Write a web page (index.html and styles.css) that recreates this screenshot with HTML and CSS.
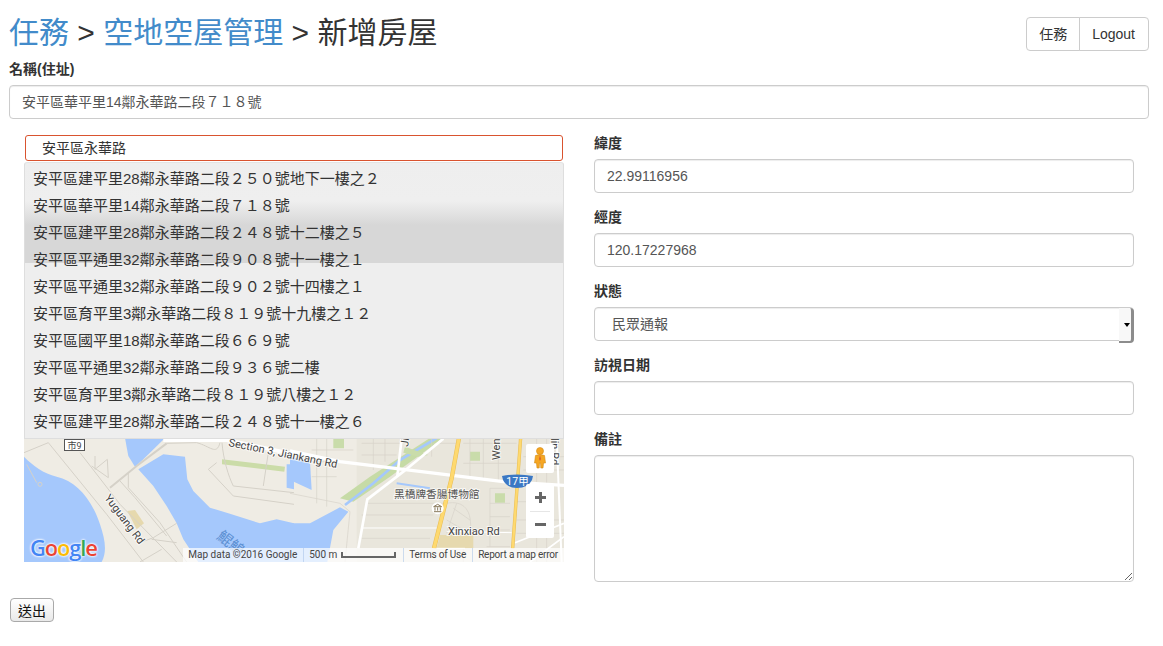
FILE: index.html
```html
<!DOCTYPE html>
<html lang="zh-Hant">
<head>
    <meta charset="UTF-8">
    <title>新增房屋</title>
    <link rel="stylesheet" href="styles.css">
</head>
<body>
    <div class="page">
        <div class="top-bar">
            <h1><a href="#">任務</a> <span class="sep">&gt;</span> <a href="#">空地空屋管理</a> <span class="sep">&gt;</span> 新增房屋</h1>
            <div class="btn-group">
                <a class="btn" href="#">任務</a>
                <a class="btn" href="#">Logout</a>
            </div>
        </div>

        <form>
            <div class="field">
                <label>名稱(住址)</label>
                <input class="control control-cjk" type="text" value="安平區華平里14鄰永華路二段７１８號">
            </div>

            <div class="row">
                <div class="col">
                    <input class="map-search" type="text" value="安平區永華路">
                    <ul class="suggestions">
                        <li>安平區建平里28鄰永華路二段２５０號地下一樓之２</li>
                        <li>安平區華平里14鄰永華路二段７１８號</li>
                        <li>安平區建平里28鄰永華路二段２４８號十二樓之５</li>
                        <li>安平區平通里32鄰永華路二段９０８號十一樓之１</li>
                        <li>安平區平通里32鄰永華路二段９０２號十四樓之１</li>
                        <li>安平區育平里3鄰永華路二段８１９號十九樓之１２</li>
                        <li>安平區國平里18鄰永華路二段６６９號</li>
                        <li>安平區平通里32鄰永華路二段９３６號二樓</li>
                        <li>安平區育平里3鄰永華路二段８１９號八樓之１２</li>
                        <li>安平區建平里28鄰永華路二段２４８號十一樓之６</li>
                    </ul>
                    <div class="map">
                        <svg class="map-canvas" viewBox="0 0 540 124" width="540" height="124">
                            <rect width="540" height="124" fill="#efece4"/>

                            <!-- left half, coords taken at 3x -->
                            <g transform="translate(-4,-2) scale(.3333)" fill="none">
                                <path d="M12,62 C40,90 70,112 110,122 C170,135 215,190 240,265 C255,310 262,345 245,378 L12,378 Z" fill="#a5c8fc"/>
                                <path d="M355,100 L430,55 L495,62 L502,130 L520,165 L570,215 L625,232 L720,262 L770,250 L822,262 L822,378 L535,378 L490,310 L470,262 L440,210 L400,150 Z" fill="#a5c8fc"/>
                                <path d="M315,6 L435,6 L370,70 L345,92 L325,60 Z" fill="#a5c8fc"/>
                                <path d="M822,85 L800,85 L800,155 L822,160 Z" fill="#a5c8fc"/>
                                <path d="M322,225 L345,222 L372,262 L350,280 Z" fill="#e6d9ae"/>
                                <path d="M606,70 L795,92 L793,107 L606,85 Z" fill="#cbdca8"/>
                                <path d="M430,12 L620,12 L822,55" stroke="#fff" stroke-width="12"/>
                                <g stroke="#d5d1c8" stroke-width="3">
                                    <path d="M270,155 L350,90 L440,22" stroke-width="6"/>
                                    <path d="M12,50 L85,20 L260,235 L370,378"/>
                                    <path d="M20,85 L50,140"/>
                                    <circle cx="60" cy="145" r="6"/>
                                    <path d="M180,50 L300,205 L470,378"/>
                                    <path d="M225,60 L225,100 L262,70 L265,125 L215,90"/>
                                    <path d="M325,110 L325,155 L420,260 L500,378"/>
                                    <path d="M300,135 L345,185 L440,300"/>
                                    <path d="M470,262 L400,305 L360,320"/>
                                    <path d="M395,310 L470,320 M425,340 L360,378"/>
                                    <path d="M440,22 L530,20 C570,30 590,60 600,20"/>
                                    <path d="M606,20 C610,70 625,120 640,150 L822,170"/>
                                    <path d="M565,100 L640,180 L822,205 M590,80 L565,100"/>
                                    <path d="M745,50 L730,150"/>
                                </g>
                            </g>

                            <!-- right half, urban grid -->
                            <g transform="translate(266,-18) scale(.3333)" fill="none">
                                <rect x="200" y="54" width="622" height="372" fill="#e9e6dc"/>
                                <path d="M0,310 L60,310 L150,262 L175,275 L130,330 L112,426 L0,426 Z" fill="#a5c8fc"/>
                                <path d="M0,110 L60,125 L65,210 L0,180 Z" fill="#a5c8fc"/>
                                <path d="M150,235 L240,170 L420,54 L460,54 L300,170 L190,245 Z" fill="#c6dba6"/>
                                <path d="M165,255 L250,190 L330,120 L440,54" stroke="#a5c8fc" stroke-width="8"/>
                                <path d="M320,190 L420,205" stroke="#a5c8fc" stroke-width="6"/>
                                <path d="M130,56 H162 V85 H130 Z M345,80 L415,105 L385,110 L340,98 Z M540,95 H570 V122 H540 Z M615,220 H645 V248 H615 Z" fill="#c9dcaa"/>
                                <path d="M450,345 L550,345 L550,385 L440,385 Z" fill="#e6d9ae"/>
                                <g stroke="#d6d2c8" stroke-width="2">
                                    <path d="M80,54 V250 M110,54 V260 M250,54 V150 M285,54 V125 M425,54 V110 M540,54 V170 M580,54 V180 M625,54 V180 M740,54 V426 M770,54 V426"/>
                                    <path d="M65,90 H190 M65,125 H160 M65,170 H140 M215,70 H330 M215,105 H320 M430,70 H500 M520,70 H680 M520,130 H680 M700,110 H822 M700,150 H822"/>
                                    <path d="M0,220 L150,250 L180,275 L165,426 M230,250 L470,250 M215,285 L430,285 M215,355 L420,355"/>
                                    <path d="M470,250 C520,240 550,270 540,340 M490,265 L540,300 M470,300 L530,335 M500,250 L470,340"/>
                                    <path d="M600,205 H660 M600,205 V380 M600,250 H660 M600,290 H660 M600,330 H660 M590,380 H660 M520,385 V426 M680,300 H822 M680,245 H730 M680,340 H822"/>
                                </g>
                                <g stroke="#fff">
                                    <path d="M0,93 L150,125 L640,185 L822,196" stroke-width="10"/>
                                    <path d="M460,56 L340,155 L232,238 L205,385" stroke-width="8"/>
                                    <path d="M335,54 L322,170" stroke-width="8"/>
                                    <path d="M215,324 L440,324 M470,334 L665,338" stroke-width="3"/>
                                    <path d="M800,54 L815,426" stroke-width="6"/>
                                    <path d="M675,368 L822,310 M720,426 L822,350" stroke-width="5"/>
                                    <path d="M440,385 L525,385" stroke-width="3"/>
                                </g>
                                <path d="M507,54 L485,175 L432,385" stroke="#e8bd55" stroke-width="13"/>
                                <path d="M507,54 L485,175 L432,385" stroke="#fed96f" stroke-width="10"/>
                                <path d="M692,54 L668,385" stroke="#e8bd55" stroke-width="10"/>
                                <path d="M692,54 L668,385" stroke="#fed96f" stroke-width="7"/>
                                <circle cx="443" cy="265" r="18" fill="#fff"/>
                                <path d="M432,275 H454 M435,272 V262 M443,272 V262 M451,272 V262 M431,260 L443,253 L455,260 Z" stroke="#8a7a5c" stroke-width="3"/>
                            </g>

                            <text class="road" x="204" y="8" transform="rotate(11.5 204 8)">Section 3, Jiankang Rd</text>
                            <text class="road" x="80" y="60" transform="rotate(53 80 60)">Yuguang Rd</text>
                            <text class="road" x="424" y="97">Xinxiao Rd</text>
                            <text class="road" x="476" y="22" transform="rotate(-90 476 22)">Wen</text>
                            <text class="road" x="384" y="9" transform="rotate(-82 384 9)">Ji</text>
                            <text class="road" x="527" y="0" transform="rotate(90 527 0)">lin Rd</text>
                            <text class="poi" x="370" y="60">黑橋牌香腸博物館</text>
                            <text class="water-label" x="192" y="100" transform="rotate(38 192 100)">鯤鯓</text>

                            <rect x="40.500" y="1.500" width="20" height="11" fill="#fff" stroke="#555"/>
                            <text class="badge-text" x="50.500" y="11" text-anchor="middle">市9</text>
                            <path d="M478,38 Q493,35 509,38 L508,42 Q504,50 493,50 Q483,50 479,42 Z" fill="#3b78c4"/>
                            <text class="shield-text" x="493.500" y="47" text-anchor="middle">17甲</text>
                        </svg>

                        <div class="google-logo"><span class="g-blue">G</span><span class="g-red">o</span><span class="g-yellow">o</span><span class="g-blue">g</span><span class="g-green">l</span><span class="g-red">e</span></div>

                        <div class="pegman">
                            <svg viewBox="0 0 28 28" width="28" height="28">
                                <circle cx="14" cy="7" r="3.500" fill="#f5a623" stroke="#d18a12" stroke-width=".6"/>
                                <path d="M9.500,11.500 Q14,9.500 18.500,11.500 L19.500,19 L17.500,19 L17,24 L14.800,24 L14.500,19 L13.500,19 L13.200,24 L11,24 L10.500,19 L8.500,19 Z" fill="#f5a623" stroke="#d18a12" stroke-width=".6"/>
                                <path d="M14,11 L15,15 L14,17 L13,15 Z" fill="#d9622b"/>
                            </svg>
                        </div>
                        <div class="zoom-box">
                            <span class="zoom-btn"><i class="bar"></i><i class="bar bar-v"></i></span>
                            <span class="zoom-rule"></span>
                            <span class="zoom-btn"><i class="bar"></i></span>
                        </div>

                        <div class="attribution">
                            <span class="attr-item">Map data ©2016 Google</span>
                            <span class="attr-item attr-scale">500 m <i class="scale-bar"></i></span>
                            <span class="attr-item attr-terms">Terms of Use</span>
                            <span class="attr-item attr-last">Report a map error</span>
                        </div>
                    </div>
                </div>

                <div class="col">
                    <div class="field">
                        <label>緯度</label>
                        <input class="control" type="text" value="22.99116956">
                    </div>
                    <div class="field">
                        <label>經度</label>
                        <input class="control" type="text" value="120.17227968">
                    </div>
                    <div class="field">
                        <label>狀態</label>
                        <div class="select-wrap">
                            <select class="control">
                                <option>民眾通報</option>
                            </select>
                        </div>
                    </div>
                    <div class="field">
                        <label>訪視日期</label>
                        <input class="control" type="text">
                    </div>
                    <div class="field">
                        <label>備註</label>
                        <textarea class="control note"></textarea>
                    </div>
                </div>
            </div>

            <button class="submit" type="button">送出</button>
        </form>
    </div>
</body>
</html>
```

FILE: styles.css
```css
* {
    box-sizing: border-box;
}

body {
    margin: 0;
    font-family: "Liberation Sans", "Noto Sans CJK TC", sans-serif;
    font-size: 14px;
    line-height: 20px;
    color: #333;
    background-color: #fff;
}

.page {
    padding: 0 14px 0 9px;
}

a {
    color: #428bca;
    text-decoration: none;
}

/* Header */
.top-bar {
    display: flex;
    justify-content: space-between;
    height: 60px;
}

h1 {
    margin: 0;
    padding: 12px 0 0;
    font-size: 30px;
    font-weight: 400;
    line-height: 42px;
}

.btn-group {
    display: flex;
    margin-top: 17px;
    height: 34px;
}

.btn {
    padding: 6px 12px;
    color: #333;
    border: 1px solid #ccc;
}

.btn:first-child {
    border-radius: 4px 0 0 4px;
}

.btn:last-child {
    margin-left: -1px;
    padding-right: 13px;
    border-radius: 0 4px 4px 0;
}

/* Form fields */
.field {
    margin-bottom: 15px;
}

label {
    display: block;
    height: 20px;
    margin-bottom: 5px;
    font-weight: 700;
    line-height: 18px;
}

.control {
    display: block;
    width: 100%;
    height: 34px;
    padding: 6px 12px;
    font-family: inherit;
    font-size: 14px;
    line-height: 20px;
    color: #555;
    background-color: #fff;
    border: 1px solid #ccc;
    border-radius: 4px;
    box-shadow: inset 0 1px 1px rgba(0, 0, 0, 0.075);
}

.control-cjk {
    padding-bottom: 8px;
}

.note {
    height: 127px;
    resize: both;
}

.row {
    display: grid;
    grid-template-columns: 570px 570px;
}

.col {
    padding: 0 15px;
}

/* Select, drawn with the old bevelled arrow */
.select-wrap {
    position: relative;
}

.select-wrap select {
    padding-left: 17px;
    appearance: none;
}

.select-wrap::before {
    content: "";
    position: absolute;
    top: 1px;
    right: 0;
    width: 12px;
    height: 33px;
    background-color: #f8f8f8;
    border-right: 3px solid #8c8c8c;
    border-bottom: 2px solid #8c8c8c;
    border-radius: 0 4px 4px 0;
}

.select-wrap::after {
    content: "";
    position: absolute;
    top: 16px;
    right: 4px;
    border-top: 4px solid #000;
    border-left: 3px solid transparent;
    border-right: 3px solid transparent;
}

/* Map search + suggestions */
.map-search {
    display: block;
    width: 538px;
    height: 26px;
    margin: 1px 0 1px 1px;
    padding: 0 16px 2px;
    font-family: inherit;
    font-size: 14px;
    color: #333;
    background-color: #fff;
    border: 1px solid #d9532f;
    border-radius: 3px;
    outline: none;
}

.suggestions {
    list-style-type: none;
    width: 540px;
    height: 277px;
    margin: 0;
    padding: 2px 0 0;
    background: linear-gradient(#eeeeee 0, #efefef 38px, #d7d7d7 62px, #d7d7d7 100px, #eeeeee 100px);
    border: 1px solid #dedede;
    border-top-color: #e4e4e4;
    border-radius: 3px 3px 0 0;
}

.suggestions li {
    height: 27px;
    padding-left: 8px;
    font-size: 15px;
    line-height: 27px;
    color: #333;
    white-space: nowrap;
}

/* Map */
.map {
    position: relative;
    width: 540px;
    height: 123px;
    overflow: hidden;
}

.map-canvas {
    display: block;
    margin-top: -1px;
}

.road {
    font-family: Roboto, sans-serif;
    font-size: 11px;
    fill: #444;
    stroke: #fff;
    stroke-width: 2px;
    stroke-opacity: 0.7;
    paint-order: stroke;
}

.poi {
    font-family: "Noto Sans CJK TC", sans-serif;
    font-size: 10.700px;
    fill: #555;
    stroke: #fff;
    stroke-width: 2px;
    stroke-opacity: 0.7;
    paint-order: stroke;
}

.water-label {
    font-family: "Noto Sans CJK TC", sans-serif;
    font-size: 15px;
    fill: #5b8fd2;
}

.badge-text {
    font-family: Roboto, "Noto Sans CJK TC", sans-serif;
    font-size: 9px;
    fill: #444;
}

.shield-text {
    font-family: Roboto, "Noto Sans CJK TC", sans-serif;
    font-size: 10.500px;
    fill: #fff;
}

.google-logo {
    position: absolute;
    left: 6px;
    bottom: 2px;
    font-family: "Open Sans", sans-serif;
    font-size: 22px;
    font-weight: 600;
    line-height: 26px;
    letter-spacing: -1.2px;
    text-shadow: 0 0 2px #fff, 0 0 2px #fff, 0 0 3px #fff;
}

.g-blue { color: #4285f4; }
.g-red { color: #ea4335; }
.g-yellow { color: #fbbc05; }
.g-green { color: #34a853; }

.pegman {
    position: absolute;
    top: 5px;
    left: 502px;
    width: 28px;
    height: 29px;
    background-color: #fff;
    border-radius: 2px;
}

.pegman svg {
    display: block;
}

.zoom-box {
    position: absolute;
    top: 45px;
    left: 502px;
    display: flex;
    flex-direction: column;
    width: 28px;
    height: 54px;
    background-color: #fff;
    border-radius: 2px;
}

.zoom-btn {
    position: relative;
    flex: 1;
    display: flex;
    align-items: center;
    justify-content: center;
}

.zoom-rule {
    height: 1px;
    margin: 0 4px;
    background-color: #e6e6e6;
}

.bar {
    position: absolute;
    width: 11px;
    height: 3px;
    background-color: #666;
}

.bar-v {
    width: 3px;
    height: 11px;
}

.attribution {
    position: absolute;
    right: 0;
    bottom: 0;
    display: flex;
    height: 14px;
    font-family: Roboto, sans-serif;
    font-size: 10px;
    line-height: 14px;
    color: #444;
    background-color: rgba(255, 255, 255, 0.7);
    white-space: nowrap;
}

.attr-item {
    padding: 0 6px 0 5px;
    border-right: 1px solid rgba(160, 190, 230, 0.5);
}

.attr-scale {
    display: flex;
    gap: 4px;
    padding-right: 7px;
}

.attr-terms {
    letter-spacing: -0.2px;
}

.attr-last {
    letter-spacing: -0.2px;
    border-right: 0;
}

.scale-bar {
    display: block;
    width: 55px;
    height: 6px;
    margin-top: 4px;
    border: 2px solid #666;
    border-top: 0;
}

/* Submit */
.submit {
    display: block;
    width: 44px;
    height: 24px;
    margin: 1px 0 0 1px;
    padding: 0;
    font-family: inherit;
    font-size: 14px;
    color: #111;
    background: linear-gradient(#fff, #e9e9e9);
    border: 1px solid #a9a9a9;
    border-radius: 4px;
}
```
